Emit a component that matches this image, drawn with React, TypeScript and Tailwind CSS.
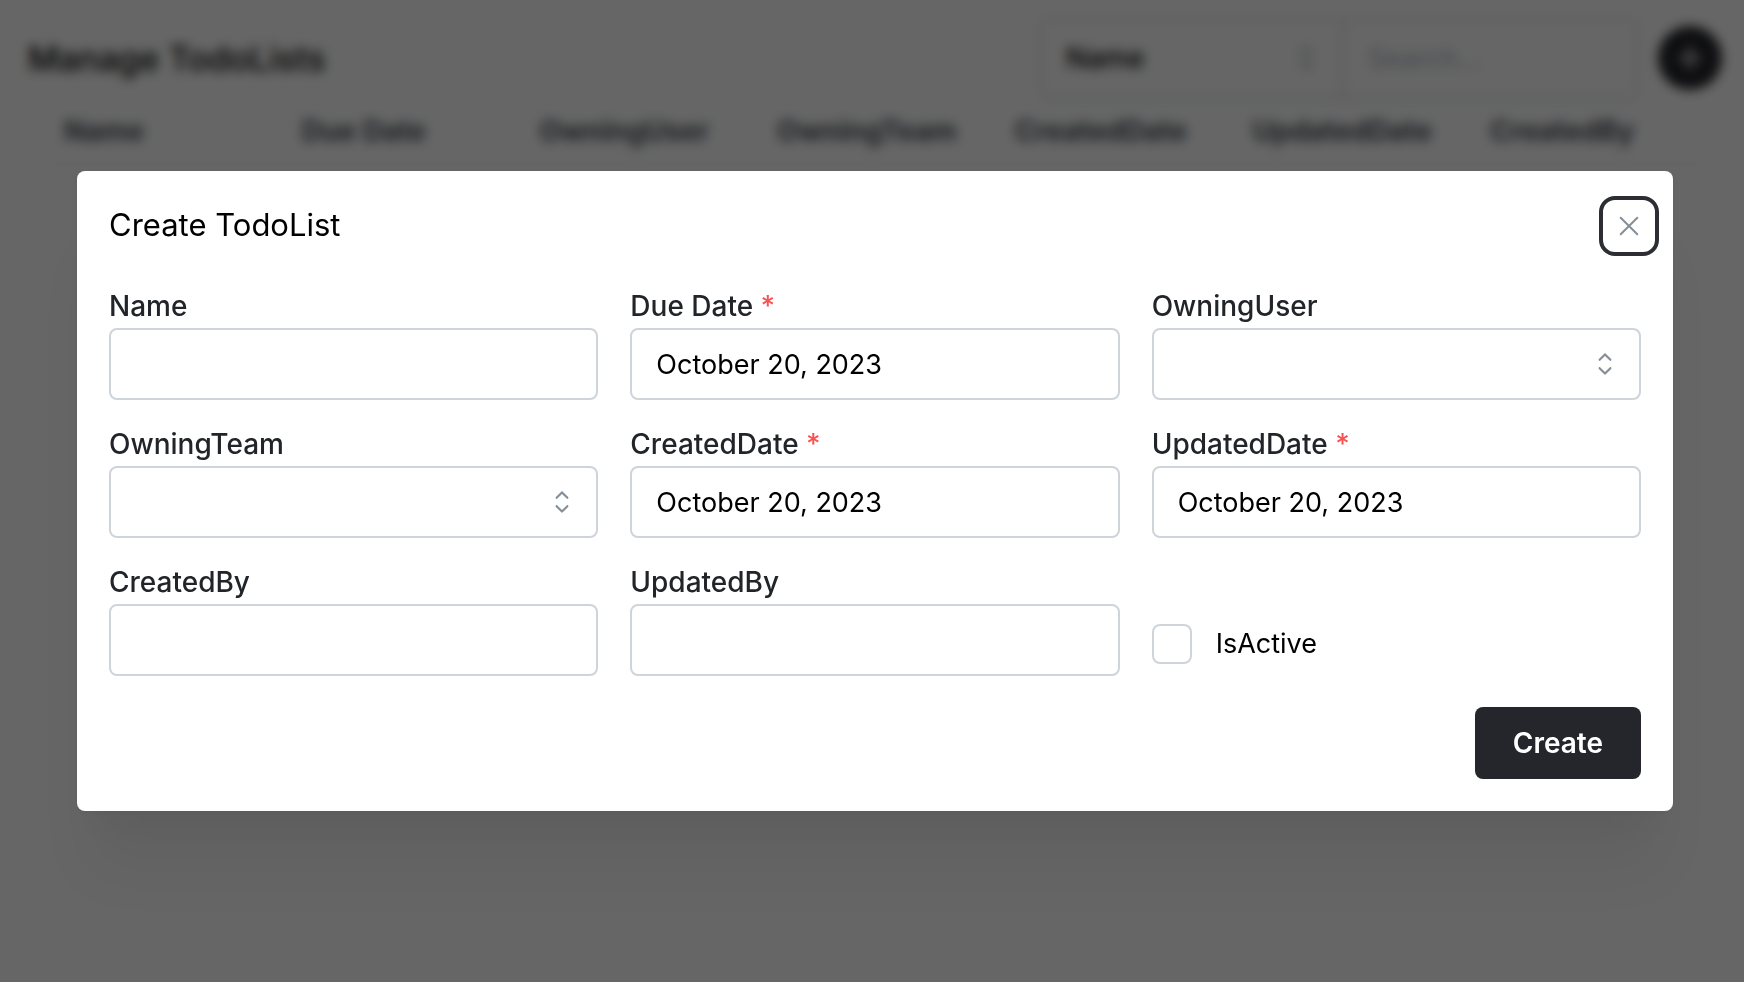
import { useId } from "react";
import type { ReactNode } from "react";

const columns = [
  "Name",
  "Due Date",
  "OwningUser",
  "OwningTeam",
  "CreatedDate",
  "UpdatedDate",
  "CreatedBy",
];

function SelectorIcon() {
  return (
    <svg
      viewBox="0 0 15 15"
      className="pointer-events-none absolute top-1/2 right-[18px] size-9 -translate-y-1/2"
      fill="none"
      aria-hidden="true"
    >
      <path
        d="M4.93179 5.43179C4.75605 5.60753 4.75605 5.89245 4.93179 6.06819C5.10753 6.24392 5.39245 6.24392 5.56819 6.06819L7.49999 4.13638L9.43179 6.06819C9.60753 6.24392 9.89245 6.24392 10.0682 6.06819C10.2439 5.89245 10.2439 5.60753 10.0682 5.43179L7.81819 3.18179C7.73379 3.0974 7.61933 3.04999 7.49999 3.04999C7.38064 3.04999 7.26618 3.0974 7.18179 3.18179L4.93179 5.43179ZM10.0682 9.56819C10.2439 9.39245 10.2439 9.10753 10.0682 8.93179C9.89245 8.75606 9.60753 8.75606 9.43179 8.93179L7.49999 10.8636L5.56819 8.93179C5.39245 8.75606 5.10753 8.75606 4.93179 8.93179C4.75605 9.10753 4.75605 9.39245 4.93179 9.56819L7.18179 11.8182C7.35753 11.9939 7.64245 11.9939 7.81819 11.8182L10.0682 9.56819Z"
        fill="#868e96"
        fillRule="evenodd"
        clipRule="evenodd"
      />
    </svg>
  );
}

function Label({
  htmlFor,
  required,
  children,
}: {
  htmlFor: string;
  required?: boolean;
  children: ReactNode;
}) {
  return (
    <label
      htmlFor={htmlFor}
      className="block text-[28px] leading-[44px] font-medium text-[#212529]"
    >
      {children}
      {required && <span className="text-[#fa5252]"> *</span>}
    </label>
  );
}

const control =
  "block h-[72px] w-full appearance-none rounded-lg border-2 border-[#ced4da] bg-white px-6 text-[27px] text-black outline-none";

function TextField({
  label,
  value = "",
  required,
}: {
  label: string;
  value?: string;
  required?: boolean;
}) {
  const id = useId();
  return (
    <div>
      <Label htmlFor={id} required={required}>
        {label}
      </Label>
      <input id={id} type="text" defaultValue={value} required={required} className={control} />
    </div>
  );
}

function SelectField({ label }: { label: string }) {
  const id = useId();
  return (
    <div>
      <Label htmlFor={id}>{label}</Label>
      <div className="relative">
        <select id={id} className={control}>
          <option value=""></option>
        </select>
        <SelectorIcon />
      </div>
    </div>
  );
}

function TodoListsPage() {
  return (
    <div className="px-7 pt-[18px]" aria-hidden="true">
      <header className="flex h-20 items-center justify-between">
        <h1 className="text-[34px] font-medium text-black">Manage TodoLists</h1>
        <div className="flex items-center gap-5">
          <div className="flex h-20 w-[598px] items-center rounded-lg border-2 border-[#dee2e6] shadow-sm">
            <div className="relative h-full w-[302px] border-r-2 border-[#ced4da]">
              <select
                aria-label="Search field"
                className="h-full w-full appearance-none bg-white px-6 text-[28px] font-medium text-black outline-none"
              >
                <option>Name</option>
              </select>
              <SelectorIcon />
            </div>
            <input
              type="search"
              aria-label="Search"
              placeholder="Search..."
              className="h-full min-w-0 flex-1 bg-white px-6 text-[27px] outline-none placeholder:text-[#adb5bd]"
            />
          </div>
          <button
            type="button"
            aria-label="Add TodoList"
            className="-mr-1.5 flex size-16 items-center justify-center rounded-full bg-[#25262b] text-white"
          >
            <svg viewBox="0 0 24 24" className="size-9" stroke="currentColor" strokeWidth="2" strokeLinecap="round">
              <path d="M12 5v14M5 12h14" />
            </svg>
          </button>
        </div>
      </header>
      <div className="pr-2 pl-4">
        <table className="w-full table-fixed border-b-2 border-[#f1f3f5] text-left">
          <thead>
            <tr>
              {columns.map((name) => (
                <th key={name} className="h-[66px] px-5 text-[28px] font-bold text-[#495057]">
                  {name}
                </th>
              ))}
            </tr>
          </thead>
        </table>
      </div>
    </div>
  );
}

export default function App() {
  return (
    <div className="min-h-screen bg-white font-[Inter,'Liberation_Sans',sans-serif]">
      <TodoListsPage />
      <div className="fixed inset-0 bg-black/60 backdrop-blur-[6px]" />
      <div className="fixed inset-0 flex items-center overflow-auto pr-[71px] pl-[77px]">
        <section
          role="dialog"
          aria-modal="true"
          aria-labelledby="dialog-title"
          className="w-full rounded-lg bg-white shadow-[0_2px_6px_rgba(0,0,0,0.05),0_72px_56px_-14px_rgba(0,0,0,0.05),0_34px_34px_-14px_rgba(0,0,0,0.04)]"
        >
          <header className="flex h-[109px] items-center justify-between pr-[22px] pl-8">
            <h2 id="dialog-title" className="text-[31px] text-black">
              Create TodoList
            </h2>
            <button
              type="button"
              aria-label="Close"
              className="flex size-11 items-center justify-center rounded-lg text-[#868e96] outline-4 outline-offset-4 outline-[#2c2e33]"
            >
              <svg viewBox="0 0 20 20" className="size-5" fill="none" stroke="currentColor" strokeWidth="2" strokeLinecap="round">
                <path d="M1.7 1.7l16.6 16.6M18.3 1.7L1.7 18.3" />
              </svg>
            </button>
          </header>
          <form className="px-8 pt-1 pb-8" onSubmit={(event) => event.preventDefault()}>
            <div className="grid grid-cols-3 gap-x-8 gap-y-[22px]">
              <TextField label="Name" />
              <TextField label="Due Date" value="October 20, 2023" required />
              <SelectField label="OwningUser" />
              <SelectField label="OwningTeam" />
              <TextField label="CreatedDate" value="October 20, 2023" required />
              <TextField label="UpdatedDate" value="October 20, 2023" required />
              <TextField label="CreatedBy" />
              <TextField label="UpdatedBy" />
              <label className="flex items-center gap-6 self-end pb-3 text-[27px] leading-10 text-black">
                <input
                  type="checkbox"
                  className="size-10 appearance-none rounded-lg border-2 border-[#ced4da] bg-white checked:bg-[#25262b]"
                />
                IsActive
              </label>
            </div>
            <div className="mt-[31px] flex justify-end">
              <button
                type="submit"
                className="h-[72px] rounded-lg bg-[#25262b] px-[38px] text-[28px] font-semibold text-white"
              >
                Create
              </button>
            </div>
          </form>
        </section>
      </div>
    </div>
  );
}
